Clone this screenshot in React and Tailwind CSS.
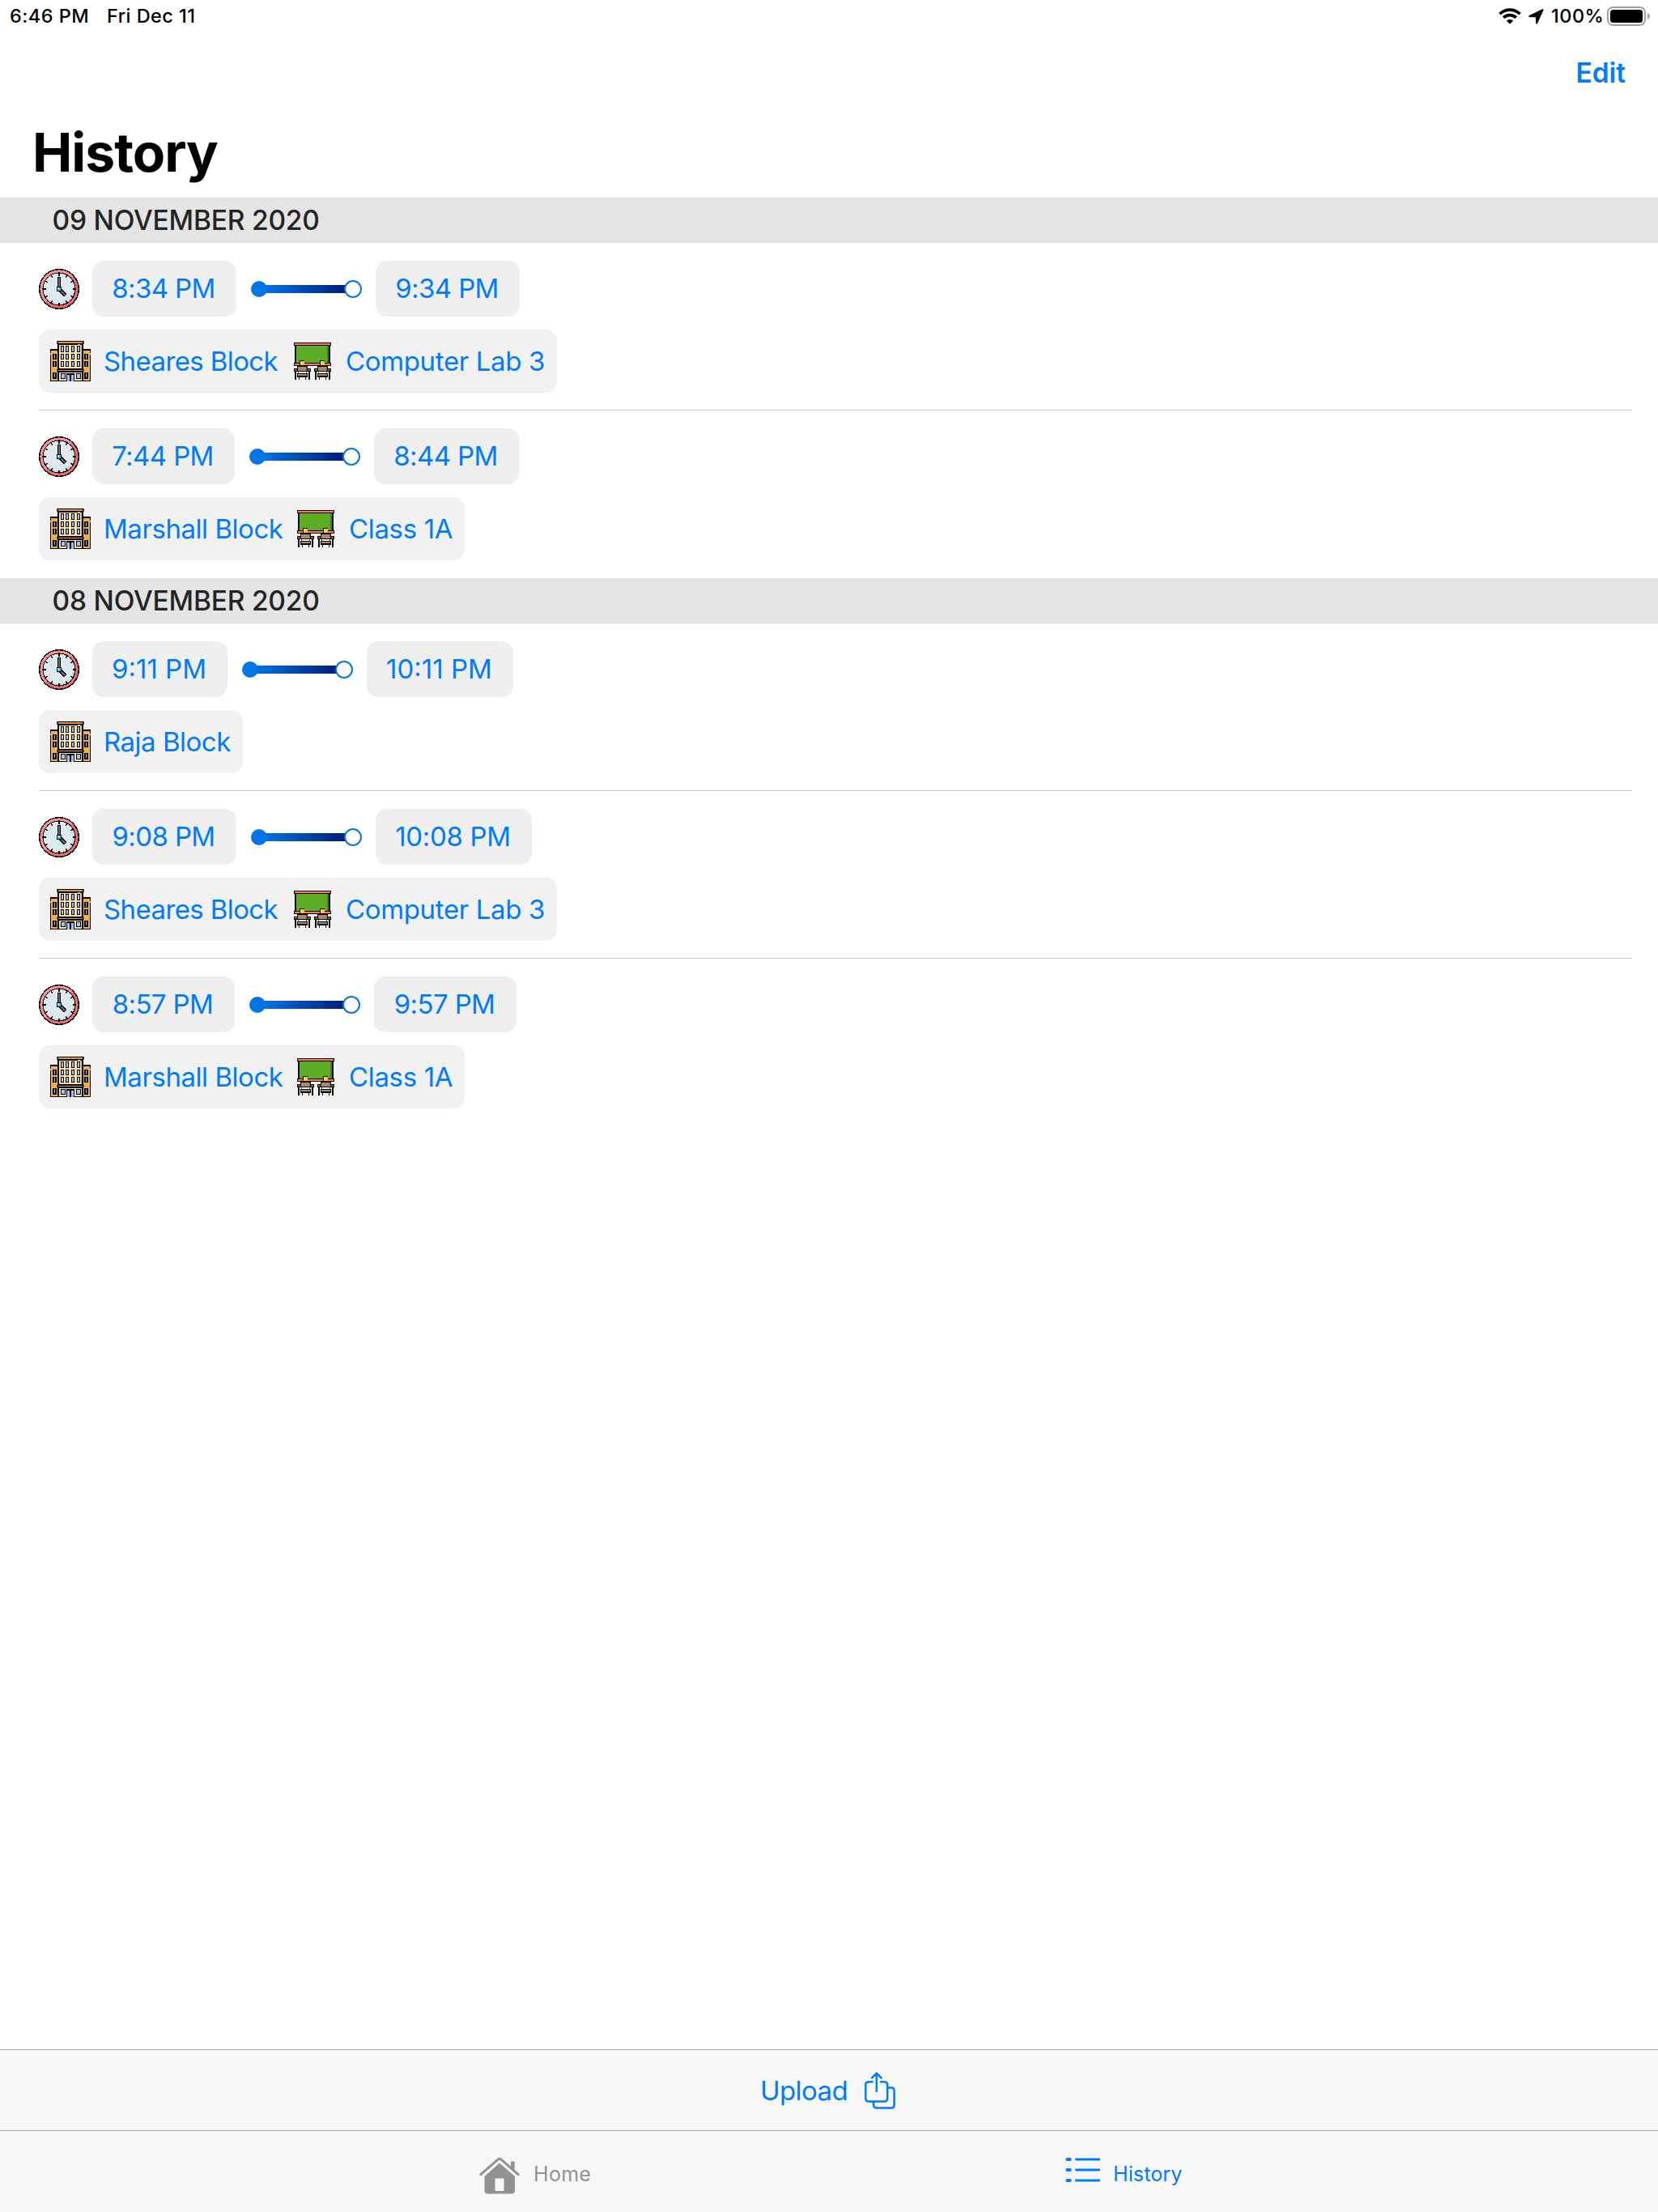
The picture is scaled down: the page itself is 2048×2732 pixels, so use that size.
import React from 'react';

const sections = [
  {
    date: '09 NOVEMBER 2020',
    entries: [
      { from: '8:34 PM', to: '9:34 PM', fromW: 'w-[178px] tracking-[-0.6px]', toW: 'w-[178px] tracking-[-0.6px]', block: 'Sheares Block', room: 'Computer Lab 3', blockW: 'w-[233px] tracking-[-0.6px]', width: 'w-[640px]' },
      { from: '7:44 PM', to: '8:44 PM', fromW: 'w-[176px] tracking-[-0.6px]', toW: 'w-[179px] tracking-[-0.6px]', block: 'Marshall Block', room: 'Class 1A', blockW: 'w-[237px] tracking-[-0.45px]', width: 'w-[526px]' },
    ],
  },
  {
    date: '08 NOVEMBER 2020',
    entries: [
      { from: '9:11 PM', to: '10:11 PM', fromW: 'w-[167px] tracking-[0px]', toW: 'w-[181px] tracking-[0px]', block: 'Raja Block', blockW: 'w-[160px] tracking-[-0.5px]', width: 'w-[252px]' },
      { from: '9:08 PM', to: '10:08 PM', fromW: 'w-[178px] tracking-[-0.6px]', toW: 'w-[193px] tracking-[-0.3px]', block: 'Sheares Block', room: 'Computer Lab 3', blockW: 'w-[233px] tracking-[-0.6px]', width: 'w-[640px]' },
      { from: '8:57 PM', to: '9:57 PM', fromW: 'w-[176px] tracking-[-0.6px]', toW: 'w-[176px] tracking-[-0.6px]', block: 'Marshall Block', room: 'Class 1A', blockW: 'w-[237px] tracking-[-0.45px]', width: 'w-[526px]' },
    ],
  },
];

function ClockIcon() {
  return (
    <svg className="h-[50px] w-[50px] shrink-0" viewBox="-25 -25 50 50" shapeRendering="crispEdges">
      <circle r="25" fill="#000" />
      <circle r="23.6" fill="#f0696b" />
      <path d="M-16.7 16.7A23.6 23.6 0 0 1 16.7 -16.7L0 0Z" fill="#fa8f8f" />
      <circle r="20.6" fill="#000" />
      <circle r="19.4" fill="#c3dbe3" />
      <ellipse cx="-1" cy="-1" rx="18.4" ry="18.4" fill="#dce9ee" />
      {[0, 30, 60, 90, 120, 150, 180, 210, 240, 270, 300, 330].map((a) => (
        <rect key={a} x="-0.8" y="-20.5" width="1.6" height="4" fill="#000" transform={`rotate(${a})`} />
      ))}
      <rect x="-2" y="-15" width="4" height="13" fill="#000" />
      <rect x="-1" y="-14" width="2" height="11" fill="#756870" />
      <path d="M1 1L8 8" stroke="#000" strokeWidth="5" />
      <path d="M2 2L7.4 7.4" stroke="#756870" strokeWidth="2.4" />
      <rect x="-3" y="-3" width="6" height="6" fill="#000" />
      <rect x="-2" y="-2" width="4" height="4" fill="#35cdf5" />
      <rect x="-2" y="-2" width="2" height="2" fill="#a4ecff" />
    </svg>
  );
}

function Pane({ x, y, w, h }) {
  return (
    <g>
      <rect x={x} y={y} width={w} height={h} fill="#000" />
      <rect x={x + 1} y={y + 1} width={w - 2} height={h - 2} fill="#9cc3fb" />
    </g>
  );
}

function BuildingIcon() {
  return (
    <svg className="h-[50px] w-[50px] shrink-0" viewBox="0 0 50 50" shapeRendering="crispEdges">
      <rect x="0" y="10" width="50" height="40" fill="#000" />
      <rect x="1" y="12" width="8" height="37" fill="#efb14b" />
      <rect x="41" y="12" width="8" height="37" fill="#efb14b" />
      <rect x="0" y="15" width="1" height="2" fill="#bbb" />
      <rect x="49" y="15" width="1" height="2" fill="#bbb" />
      <rect x="9" y="0" width="32" height="50" fill="#000" />
      <rect x="8" y="0" width="1" height="4" fill="#555" />
      <rect x="41" y="0" width="1" height="4" fill="#555" />
      <rect x="10" y="1" width="30" height="2" fill="#e5913a" />
      <rect x="11" y="5" width="28" height="29" fill="#fce0a6" />
      <rect x="38" y="5" width="1" height="29" fill="#efb14b" />
      <rect x="34" y="4" width="3" height="1" fill="#efb14b" />
      <rect x="10" y="36" width="30" height="1" fill="#e5913a" />
      <rect x="8" y="35" width="1" height="3" fill="#555" />
      <rect x="41" y="35" width="1" height="3" fill="#555" />
      <rect x="11" y="39" width="28" height="10" fill="#fce0a6" />
      {[3, 42].map((x) => [16, 25, 39].map((y) => (
        <g key={`${x}-${y}`}>
          <rect x={x} y={y} width="5" height={y === 39 ? 8 : 7} fill="#000" />
          <rect x={x + 2} y={y + 1} width="1" height="5" fill="#9cc3fb" />
        </g>
      )))}
      {[13, 19, 26, 33].map((x) => [6, 16, 25].map((y) => (
        <Pane key={`${x}-${y}`} x={x} y={y} w={4} h={y === 6 ? 8 : 7} />
      )))}
      <Pane x={13} y={40} w={6} h={7} />
      <Pane x={32} y={40} w={6} h={7} />
      <rect x="20" y="40" width="10" height="10" fill="#000" />
      <rect x="21" y="42" width="3" height="8" fill="#9cc3fb" />
      <rect x="26" y="42" width="3" height="8" fill="#9cc3fb" />
    </svg>
  );
}

function Desk({ x }) {
  return (
    <g transform={`translate(${x} 0)`}>
      <rect x="7" y="22" width="6" height="7" fill="#000" />
      <rect x="8" y="23" width="5" height="5" fill="#fdc911" />
      <rect x="8" y="23" width="2" height="5" fill="#ffdc3a" />
      <rect x="0" y="32" width="21" height="4" fill="#000" />
      <rect x="1" y="33" width="3" height="2" fill="#7c6044" />
      <rect x="17" y="33" width="3" height="2" fill="#7c6044" />
      <rect x="4" y="29" width="13" height="7" fill="#000" />
      <rect x="5" y="30" width="11" height="5" fill="#a98a66" />
      <rect x="15" y="30" width="1" height="5" fill="#8b6d4c" />
      <rect x="1" y="36" width="2" height="10" fill="#000" />
      <rect x="18" y="36" width="2" height="10" fill="#000" />
      <rect x="5" y="36" width="1" height="3" fill="#555" />
      <rect x="15" y="36" width="1" height="3" fill="#555" />
      <rect x="4" y="38" width="13" height="5" fill="#000" />
      <rect x="5" y="39" width="11" height="2" fill="#a98a66" />
      <rect x="6" y="43" width="1" height="3" fill="#000" />
      <rect x="14" y="43" width="1" height="3" fill="#000" />
    </g>
  );
}

function ClassroomIcon() {
  return (
    <svg className="h-[46px] w-[46px] shrink-0" viewBox="0 0 46 46" shapeRendering="crispEdges">
      <rect x="1" y="2" width="44" height="27" fill="#000" />
      <rect x="0" y="0" width="46" height="4" fill="#000" />
      <rect x="1" y="1" width="44" height="2" fill="#ff7956" />
      <rect x="3" y="4" width="40" height="21" fill="#5dac25" />
      <rect x="41" y="4" width="2" height="21" fill="#43831a" />
      <rect x="0" y="25" width="46" height="4" fill="#000" />
      <rect x="1" y="26" width="44" height="2" fill="#ff7956" />
      <Desk x={0} />
      <Desk x={25} />
    </svg>
  );
}

function TimePill({ children, width }) {
  return (
    <div className={`flex h-[69px] items-center justify-center rounded-[14px] bg-[#efefef] pr-[2px] text-[33px] leading-none text-[#007aff] ${width}`}>
      <span className="whitespace-nowrap">{children}</span>
    </div>
  );
}

function Connector() {
  return (
    <div className="mr-[17px] ml-[18px] flex w-[137px] items-center">
      <div className="z-10 -mr-[4px] h-[20px] w-[20px] shrink-0 rounded-full bg-[#0475e5]" />
      <div className="h-[10px] flex-1 bg-linear-to-r from-[#0475e5] to-[#001a78]" />
      <div className="z-10 -ml-[3px] h-[22px] w-[22px] shrink-0 rounded-full border-2 border-[#0475e5] bg-white" />
    </div>
  );
}

function Entry({ entry, divided }) {
  return (
    <li className="h-[207px] pr-8 pl-12">
      <div className={`flex h-full flex-col pt-[22px] ${divided ? 'border-b border-[#c6c6c8]' : ''}`}>
        <div className="flex items-center">
          <ClockIcon />
          <div className="ml-4 flex items-center">
            <TimePill width={entry.fromW}>{entry.from}</TimePill>
            <Connector />
            <TimePill width={entry.toW}>{entry.to}</TimePill>
          </div>
        </div>
        <div className={`mt-4 flex h-[78px] items-center rounded-[14px] bg-[#f1f1f1] pl-[14px] text-[33px] leading-none text-[#007aff] ${entry.width}`}>
          <BuildingIcon />
          <span className={`shrink-0 pl-4 whitespace-nowrap ${entry.blockW}`}>{entry.block}</span>
          {entry.room && (
            <>
              <div className="ml-[18px]"><ClassroomIcon /></div>
              <span className="ml-[18px] tracking-[-0.35px] whitespace-nowrap">{entry.room}</span>
            </>
          )}
        </div>
      </div>
    </li>
  );
}

function StatusBar() {
  return (
    <div className="flex h-10 items-center justify-between pr-[9px] pl-[12px] text-[23.5px] leading-none font-medium tracking-[0.45px] text-black">
      <div className="flex gap-[22px]">
        <span>6:46 PM</span>
        <span>Fri Dec 11</span>
      </div>
      <div className="flex items-center">
        <svg className="h-[20px] w-[28px]" viewBox="0 0 28 20" fill="none" stroke="#000" strokeWidth="3.6">
          <path d="M1.6 7.2A17.6 17.6 0 0 1 26.4 7.2" />
          <path d="M6.2 11.8A11.2 11.2 0 0 1 21.8 11.8" />
          <path d="M14 19.8L9.8 15.6A6 6 0 0 1 18.2 15.6Z" fill="#000" stroke="none" />
        </svg>
        <svg className="ml-[9px] h-[19px] w-[19px] overflow-visible" viewBox="0 0 19 18">
          <path d="M18.2 .6L10.6 17.6Q10 18.2 9.6 17.2L9.4 9.4L1.2 9.2Q-.2 8.8 1 8L17.2 .2Q18.2 0 18.2 .6Z" fill="#000" stroke="#000" strokeWidth="0.9" strokeLinejoin="round" />
        </svg>
        <span className="ml-[9px] w-[64px] tracking-[0.5px] whitespace-nowrap">100%</span>
        <svg className="ml-[5px] h-[24px] w-[54px]" viewBox="0 0 54 24">
          <rect x="1" y="1" width="46" height="22" rx="6.5" fill="none" stroke="#a0a0a0" strokeWidth="2" />
          <rect x="4" y="4" width="40" height="16" rx="3.5" fill="#000" />
          <path d="M50 8Q53 9.5 53 12T50 16Z" fill="#a0a0a0" />
        </svg>
      </div>
    </div>
  );
}

function UploadIcon() {
  return (
    <svg className="h-[46px] w-[38px]" viewBox="0 0 38 46" fill="none" stroke="#007aff" strokeWidth="2.5" strokeLinecap="round" strokeLinejoin="round">
      <path d="M9.5 12.2H5.2Q1.2 12.2 1.2 16.2V32.6Q1.2 36.6 5.2 36.6H24.2Q28.2 36.6 28.2 32.6V16.2Q28.2 12.2 24.2 12.2H20" />
      <path d="M14.8 24V1.6M9 7.4L14.8 1.6L20.6 7.4" />
      <path d="M28.5 19.6H33Q36.6 19.6 36.6 23.6V40.4Q36.6 44.4 33 44.4H15Q11 44.4 11 40.4V37" />
    </svg>
  );
}

function HomeIcon() {
  return (
    <svg className="h-[46px] w-[50px]" viewBox="0 0 50 46">
      <path d="M1.8 21.6L23 3.2Q25 1.6 27 3.2L48.2 21.6" fill="none" stroke="#929292" strokeWidth="3" strokeLinecap="round" />
      <path d="M39 13V6.4Q39 5.4 40 5.4H42.6Q43.6 5.4 43.6 6.4V17Z" fill="#929292" />
      <path fillRule="evenodd" d="M25 7.6L44 24V41.5Q44 45.5 40 45.5H10.5Q6.5 45.5 6.5 41.5V24ZM19.5 26.5V42H30.5V26.5Z" fill="#929292" />
    </svg>
  );
}

function ListIcon() {
  return (
    <svg className="h-[32px] w-[43px]" viewBox="0 0 43 32" stroke="#007aff" strokeLinecap="round">
      {[3, 16, 29].map((y) => (
        <g key={y}>
          <path d={`M2.2 ${y}H5.6`} strokeWidth="4" />
          <path d={`M13.3 ${y}H41.6`} strokeWidth="2.8" />
        </g>
      ))}
    </svg>
  );
}

export default function App() {
  return (
    <div className="flex h-[2732px] w-[2048px] flex-col overflow-hidden bg-white font-['Inter',sans-serif]">
      <StatusBar />
      <header className="flex h-[204px] flex-col pl-10">
        <button className="mt-[29px] mr-[40px] h-[42px] self-end text-[33.5px] leading-[42px] font-semibold tracking-[-0.1px] text-[#007aff]">Edit</button>
        <h1 className="mt-[35px] text-[66px] leading-[84px] font-bold tracking-[-1px] text-black">History</h1>
      </header>
      <main className="flex-1">
        {sections.map((section) => (
          <section key={section.date}>
            <h2 className="h-14 bg-[#e4e4e4] pl-[64.5px] text-[33.5px] leading-[56px] font-medium tracking-[-0.2px] text-[#242424]">{section.date}</h2>
            <ul>
              {section.entries.map((entry, i) => (
                <Entry key={entry.from} entry={entry} divided={i < section.entries.length - 1} />
              ))}
            </ul>
          </section>
        ))}
      </main>
      <div className="flex h-[100px] items-center border-t border-[#a9a9a9] bg-[#f7f7f7] pl-[939px] text-[#007aff]">
        <span className="w-[129px] pt-[2px] text-[33px] leading-none tracking-[-0.6px]">Upload</span>
        <UploadIcon />
      </div>
      <nav className="flex h-[101px] border-t border-[#a9a9a9] bg-[#f7f7f7] text-[25px] leading-none tracking-[0.1px]">
        <div className="flex w-[1024px] items-start pl-[592px] text-[#929292]">
          <div className="mt-[32px]"><HomeIcon /></div>
          <span className="mt-[41px] ml-[17px] tracking-[0.3px]">Home</span>
        </div>
        <div className="flex flex-1 items-start pl-[292px] text-[#007aff]">
          <div className="mt-[32px]"><ListIcon /></div>
          <span className="mt-[41px] ml-[16px]">History</span>
        </div>
      </nav>
    </div>
  );
}
